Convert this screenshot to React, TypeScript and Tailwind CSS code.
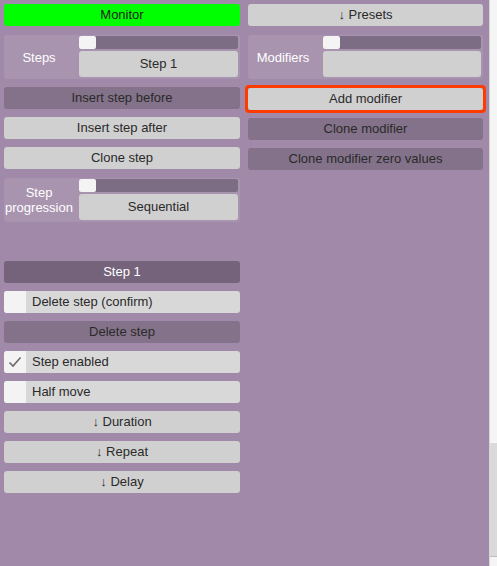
import type { ReactNode } from 'react';

const font = { fontFamily: '"Liberation Sans", Arial, sans-serif' };

function Btn({ children, tone = 'light' }: { children: ReactNode; tone?: 'light' | 'dark' | 'header' | 'green' }) {
  const toneCls =
    tone === 'dark'
      ? 'bg-[#837289] text-[#2a2a2a]'
      : tone === 'header'
        ? 'bg-[#74637b] text-white'
        : tone === 'green'
          ? 'bg-[#00ff00] text-[#222]'
          : 'bg-[#d0d0d0] text-[#2a2a2a]';
  return (
    <div className={`h-[22px] rounded-[3px] flex items-center justify-center text-[13px] ${toneCls}`}>
      {children}
    </div>
  );
}

function Check({ label, checked = false }: { label: string; checked?: boolean }) {
  return (
    <div className="h-[22px] rounded-[3px] flex items-stretch bg-[#d8d8d8] overflow-hidden text-[13px] text-[#2a2a2a]">
      <div className="w-[22px] shrink-0 bg-[#f3f3f3] flex items-center justify-center">
        {checked && (
          <svg width="14" height="12" viewBox="0 0 14 12">
            <path d="M1.5 6.5 L5 10 L12.5 1.5" fill="none" stroke="#6a6a6a" strokeWidth="1.6" />
          </svg>
        )}
      </div>
      <div className="flex items-center pl-[6px]">{label}</div>
    </div>
  );
}

function SliderPanel({ label, value }: { label: ReactNode; value: string }) {
  return (
    <div className="h-[44px] rounded-[3px] bg-[#a994af] flex p-[1px] pr-[2px]">
      <div className="w-[68px] shrink-0 flex items-center justify-center text-center text-white text-[13px] leading-[15px]">
        {label}
      </div>
      <div className="flex-1 ml-[6px] flex flex-col gap-[2px]">
        <div className="h-[13px] rounded-[2px] bg-[#7d6d84] flex">
          <div className="w-[17px] h-full rounded-[2px] bg-[#f4f4f4]" />
        </div>
        <div className="h-[26px] rounded-[3px] bg-[#d0d0d0] flex items-center justify-center text-[13px] text-[#2a2a2a]">
          {value}
        </div>
      </div>
    </div>
  );
}

export default function App() {
  return (
    <div className="w-[497px] h-[566px] bg-[#a18aa9] flex overflow-hidden" style={font}>
      <div className="flex-1 flex gap-[8px] pl-[4px] pt-[4px]">
        <div className="w-[236px] flex flex-col">
          <Btn tone="green">Monitor</Btn>
          <div className="mt-[9px]">
            <SliderPanel label="Steps" value="Step 1" />
          </div>
          <div className="mt-[8px] flex flex-col gap-[8px]">
            <Btn tone="dark">Insert step before</Btn>
            <Btn>Insert step after</Btn>
            <Btn>Clone step</Btn>
          </div>
          <div className="mt-[9px]">
            <SliderPanel
              label={
                <span>
                  Step
                  <br />
                  progression
                </span>
              }
              value="Sequential"
            />
          </div>
          <div className="mt-[39px] flex flex-col gap-[8px]">
            <Btn tone="header">Step 1</Btn>
            <Check label="Delete step (confirm)" />
            <Btn tone="dark">Delete step</Btn>
            <Check label="Step enabled" checked />
            <Check label="Half move" />
            <Btn>↓ Duration</Btn>
            <Btn>↓ Repeat</Btn>
            <Btn>↓ Delay</Btn>
          </div>
        </div>
        <div className="w-[235px] flex flex-col">
          <Btn>↓ Presets</Btn>
          <div className="mt-[9px]">
            <SliderPanel label="Modifiers" value="" />
          </div>
          <div className="mt-[9px] flex flex-col gap-[8px]">
            <div className="outline-[3px] outline-solid outline-[#ff3c00] rounded-[1px]">
              <Btn>Add modifier</Btn>
            </div>
            <Btn tone="dark">Clone modifier</Btn>
            <Btn tone="dark">Clone modifier zero values</Btn>
          </div>
        </div>
      </div>
      <div className="w-[8px] h-full flex flex-col border-l border-[#d6d6d6]">
        <div className="h-[443px] bg-[#f5f5f5]" />
        <div className="h-[114px] bg-[#dadada] border-b border-[#bdbdbd]" />
        <div className="flex-1 bg-[#f5f5f5]" />
      </div>
    </div>
  );
}
